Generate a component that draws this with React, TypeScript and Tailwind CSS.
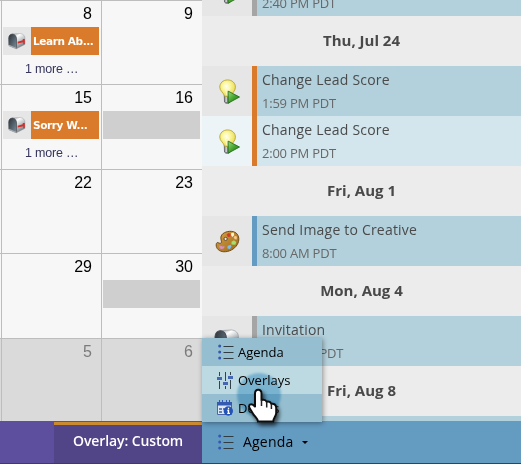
import React from "react";

function Mailbox({ className = "" }: { className?: string }) {
  return (
    <svg viewBox="0 0 18 17" className={className}>
      <defs>
        <linearGradient id="mbTop" x1="0" y1="0" x2=".6" y2="1">
          <stop offset="0" stopColor="#8d9196" />
          <stop offset=".3" stopColor="#ffffff" />
          <stop offset=".6" stopColor="#c3c7ca" />
          <stop offset="1" stopColor="#74787d" />
        </linearGradient>
        <linearGradient id="mbMouth" x1="0" y1="0" x2="1" y2="1">
          <stop offset="0" stopColor="#2c3238" />
          <stop offset="1" stopColor="#7a8f9e" />
        </linearGradient>
      </defs>
      <path d="M4.500 1 12 .5c3 .2 4.900 2 4.900 4.600v6.300L8.500 15.700V6C8.300 3 7 1.500 4.500 1Z" fill="url(#mbTop)" stroke="#8b8f94" strokeWidth=".4" />
      <path d="M.7 5.200C.8 2.500 2.300 1 4.500 1.100 7 1.400 8.400 3.400 8.500 6v9.500L.9 12.300Z" fill="url(#mbMouth)" stroke="#4a4f54" strokeWidth=".7" />
      <path d="M1 11.800 8.500 14.700v1.600L1 13.300Z" fill="#a5a9ad" />
      <path d="M9.700 8.800 14.800 7.300V6h2v4.700l-1.500.5V9.300L9.700 10.500Z" fill="#d52d28" />
    </svg>
  );
}

function Bulb() {
  return (
    <svg viewBox="0 0 22 26" className="h-[25px] w-[21px] translate-x-[2px]">
      <defs>
        <radialGradient id="glow" cx=".42" cy=".38" r=".62">
          <stop offset="0" stopColor="#fffff0" />
          <stop offset=".4" stopColor="#fbf7a0" />
          <stop offset="1" stopColor="#ead94a" />
        </radialGradient>
        <linearGradient id="go" x1="0" y1="0" x2="1" y2="1">
          <stop offset="0" stopColor="#9bdc7a" />
          <stop offset=".5" stopColor="#45a52e" />
          <stop offset="1" stopColor="#1e7414" />
        </linearGradient>
      </defs>
      <path d="M5.500 17h6v7.300c-.8 1.500-5 1.500-5.700-.2Z" fill="#8a8c8f" stroke="#55575a" strokeWidth=".8" />
      <path d="M7.500 18v6" stroke="#e2e4e6" strokeWidth="1.200" />
      <path d="M9 .9c4.900 0 8.200 3.300 8.200 7.600 0 3.900-3.300 5.500-4.500 9.200-1 .8-6 .8-7 0C4.800 14 .8 12.400.8 8.500.8 4.200 4.100.9 9 .9Z" fill="url(#glow)" stroke="#b3a12f" strokeWidth=".9" />
      <path d="M7 10 8 16.500M10.500 10 9.500 16.500M6.500 9.500h4.500" fill="none" stroke="#fffde0" strokeWidth=".8" />
      <path d="M9.600 12.600 21.500 18.800 9.600 25.200Z" fill="url(#go)" stroke="#226a1b" strokeWidth=".9" strokeLinejoin="round" />
    </svg>
  );
}

function Palette() {
  return (
    <svg viewBox="0 0 26 24" className="h-[23px] w-[25px]">
      <defs>
        <linearGradient id="wood" x1="0" y1="0" x2="1" y2="1">
          <stop offset="0" stopColor="#d8a348" />
          <stop offset="1" stopColor="#9c6618" />
        </linearGradient>
      </defs>
      <path d="M8 4C12 .8 18.500.5 22 3.200c3.500 2.800 3.500 8.200 1.200 12-3 5-8.700 7.700-14 7.500C4.500 22.500 1 19.500 1.200 15.500c.1-2.400 1.200-2.800 2.700-2 1.600.9 3 .2 2.800-1.300C6.300 9.700 5 7 8 4Z" fill="url(#wood)" stroke="#6c4712" />
      <circle cx="11" cy="9.300" r="1.700" fill="#e9e9e5" stroke="#594018" strokeWidth=".9" />
      <path d="m12 5 2-2 2.200 1-.2 3-2.500.3Z" fill="#cf3d2a" />
      <path d="m17 3.200 2.500-.5.500 2.800-2 1.700-1.300-2Z" fill="#fff4d0" />
      <path d="m20.500 6 2.300.8-.2 3-2.200-.2-.8-1.800Z" fill="#f6c68a" />
      <path d="m17.200 12.200 2.500-1.400 2.500 1.700-1 3-4-.3Z" fill="#9de06c" />
      <path d="m13.200 16.500 3.300-1.200.5 2-1.500 2.700-2.700-1Z" fill="#79bfef" />
      <path d="M4.300 16.200c2.300.4 3.600 1.500 5.500.5.300 2-1 3.200-3 3.200-1.600 0-2.500-1.400-2.500-3.700Z" fill="#d58fc2" />
    </svg>
  );
}

function ListIcon() {
  return (
    <svg viewBox="0 0 16 16" className="h-4 w-4">
      <path d="M5.500 2.500H15.500M5.500 8.500H15.500M5.500 14.500H15.500" stroke="#303b42" />
      <circle cx="1.700" cy="2" r="1.500" fill="#3557b5" />
      <circle cx="1.700" cy="8" r="1.500" fill="#3557b5" />
      <circle cx="1.700" cy="14" r="1.500" fill="#3557b5" />
    </svg>
  );
}

function SlidersIcon() {
  return (
    <svg viewBox="0 0 16 17" className="h-[17px] w-4">
      <path d="M2.500 0v4M2.500 9v8M8.500 0v9M8.500 14v3M13.500 0v3M13.500 8v9" stroke="#34434c" />
      <path d="M0 5h5v3H0ZM6 10h5v3H6ZM11 4h5v3h-5Z" fill="#4468b4" />
    </svg>
  );
}

function CalendarInfoIcon() {
  return (
    <svg viewBox="0 0 16 16" className="h-4 w-4">
      <path d="M.5 3.500h14v11H.5Z" fill="#dce9f4" stroke="#4967a8" />
      <path d="M0 2h15v3.500H0Z" fill="#3459b0" />
      <path d="M2.500 0v3M5.500 0v3M9.500 0v3M12.500 0v3" stroke="#3459b0" />
      <path d="M2 8h3v2H2ZM6 8h2v2H6ZM2 11h3v2H2Z" fill="#6681b8" />
      <circle cx="11.300" cy="11" r="4.700" fill="#2453b7" />
      <path d="M11.500 7.700v1.500M10.300 10.500h1.200v3M10.200 13.300h2.800" fill="none" stroke="#fff" strokeWidth="1.300" />
    </svg>
  );
}

function HandCursor() {
  return (
    <svg viewBox="0 0 44 52" className="absolute left-[42px] top-[48px] z-20 h-[52px] w-11 overflow-visible">
      <defs>
        <filter id="handShadow" x="-30%" y="-20%" width="170%" height="160%">
          <feDropShadow dx="2" dy="3" stdDeviation="2" floodColor="#000" floodOpacity=".65" />
        </filter>
      </defs>
      <path d="M11 7.500c0-2.500 1.200-3.700 3.200-3.700S17.500 5 17.500 7.500V14c2.500-.5 4.500.2 5.200 1.800 2.300-.6 4 .3 4.700 2 3-.4 4.800 1.200 4.800 4.200v5c0 3.500-2.700 4.500-3 8.500H14c-.5-3.500-3.300-4.700-5.300-8.300-1.600-3-4-5.500-3.700-7.200.3-2 3.200-2.800 6 .5Z" fill="#fff" stroke="#111" strokeWidth="2" strokeLinejoin="round" filter="url(#handShadow)" />
      <path d="M17.500 14v6M22.700 16v5.500M27.400 18v5" stroke="#222" strokeWidth="1.500" />
    </svg>
  );
}

function Day({ n, muted, last, more, event, block }: { n: number; muted?: boolean; last?: boolean; more?: boolean; event?: string; block?: boolean }) {
  return (
    <div className={`border-l border-t border-[#bdbdbd] ${last ? "w-[101px]" : "w-[100px]"} ${muted ? "bg-[#dadada] text-[#7b7b7b]" : "bg-[#f7f7f7] text-black"}`}>
      <div className="pr-[9px] pt-[3px] text-right text-base leading-5">{n}</div>
      {event && (
        <div className="ml-px mt-[3px] flex h-7 w-24">
          <div className="flex w-7 items-center justify-center bg-[#e6e6e6]"><Mailbox className="h-[17px] w-[18px]" /></div>
          <div className="w-[68px] whitespace-nowrap bg-[#d97b2a] pl-[2px] font-['DejaVu_Sans',sans-serif] text-[10.5px] font-bold leading-[29px] tracking-[-0.4px] text-white">{event}</div>
        </div>
      )}
      {more && <div className="pl-[23px] pt-[4px] text-[12.5px] leading-5 tracking-[-0.2px] text-[#35355d]">1 more …</div>}
      {block && <div className="ml-px mt-[3px] h-7 w-[97px] bg-[#cfcfcf]" />}
    </div>
  );
}

function Heading({ children }: { children: React.ReactNode }) {
  return <div className="h-[50px] shrink-0 bg-[#ececec] text-center text-[15px] font-bold leading-[49px] text-[#494949]">{children}</div>;
}

function Entry({ title, time, stripe, icon, light }: { title: string; time: string; stripe: string; icon: React.ReactNode; light?: boolean }) {
  return (
    <div className={`flex h-[50px] shrink-0 ${light ? "bg-[#d3e6ed]" : "bg-[#b3d1dc]"}`}>
      <div className={`flex w-[50px] items-center justify-center ${light ? "bg-[#ecf4f7]" : "bg-[#e6e6e6]"}`}>{icon}</div>
      <div className={`w-[5px] ${stripe}`} />
      <div className="whitespace-nowrap pl-[5px] pt-[2px]">
        <div className="text-[14px] leading-[24px] tracking-[0.2px] text-[#4a4a4a]">{title}</div>
        <div className="text-[13px] leading-[22px] tracking-[-0.22px] text-[#686868]">{time}</div>
      </div>
    </div>
  );
}

export default function App() {
  return (
    <div className="relative flex h-[464px] w-[521px] flex-col overflow-hidden bg-[#ececec] font-['Open_Sans',sans-serif]">
      <div className="flex h-[421px]">
        <div className="grid w-[202px] grid-cols-[1px_100px_101px] grid-rows-[84px_85px_84px_85px_83px] bg-[#f7f7f7] font-['Liberation_Sans',Arial,sans-serif]">
          <div className="border-t border-[#bdbdbd]" />
          <Day n={8} event="Learn Ab..." more />
          <Day n={9} last />
          <div className="border-t border-[#bdbdbd]" />
          <Day n={15} event="Sorry W..." more />
          <Day n={16} last block />
          <div className="border-t border-[#bdbdbd]" />
          <Day n={22} />
          <Day n={23} last />
          <div className="border-t border-[#bdbdbd]" />
          <Day n={29} />
          <Day n={30} last block />
          <div className="border-t border-[#bdbdbd] bg-[#dadada]" />
          <Day n={5} muted />
          <Day n={6} muted last />
        </div>
        <div className="flex w-[319px] flex-col overflow-hidden">
          <div className="flex h-4 shrink-0 flex-col justify-end overflow-hidden">
            <Entry title="Change Lead Score" time="2:40 PM PDT" stripe="bg-[#a5a5a5]" icon={<Bulb />} />
          </div>
          <Heading>Thu, Jul 24</Heading>
          <Entry title="Change Lead Score" time="1:59 PM PDT" stripe="bg-[#d97b2a]" icon={<Bulb />} />
          <Entry title="Change Lead Score" time="2:00 PM PDT" stripe="bg-[#d97b2a]" icon={<Bulb />} light />
          <Heading>Fri, Aug 1</Heading>
          <Entry title="Send Image to Creative" time="8:00 AM PDT" stripe="bg-[#649bc3]" icon={<Palette />} />
          <Heading>Mon, Aug 4</Heading>
          <Entry title="Invitation" time="12:00 PM PDT" stripe="bg-[#a5a5a5]" icon={<Mailbox className="h-[25px] w-[26px]" />} />
          <Heading>Fri, Aug 8</Heading>
          <div className="h-[5px] bg-[#b3d1dc]" />
        </div>
      </div>

      <div className="flex h-[43px] border-b border-[#414141]">
        <div className="w-[54px] bg-[#5e4f9e]" />
        <div className="w-[148px] border-t border-[#5e4f9e] bg-[#514487]">
          <div className="h-[3px] bg-[#cc8a30]" />
          <div className="pl-[19px] text-[14px] font-semibold leading-[31px] tracking-[-0.1px] text-white">Overlay: Custom</div>
        </div>
        <div className="flex w-[319px] items-center bg-[#649bc1] pl-4">
          <ListIcon />
          <span className="pl-[9px] text-[14px] leading-5 tracking-[0.2px] text-black">Agenda</span>
          <span className="ml-[9px] border-x-[3px] border-t-[3px] border-x-transparent border-t-black" />
        </div>
      </div>

      <div className="absolute left-[202px] top-[338px] w-[120px] text-[13px] leading-7 text-black shadow-[1px_1px_5px_rgba(0,0,0,0.4)]">
        <div className="flex h-7 items-center bg-[#95bfd0] pl-4"><ListIcon /><span className="pl-1">Agenda</span></div>
        <div className="flex h-7 items-center bg-[#bdd9e2] pl-[15px]"><SlidersIcon /><span className="pl-[5px]">Overlays</span></div>
        <div className="flex h-7 items-center bg-[#95bfd0] pl-[15px]"><CalendarInfoIcon /><span className="pl-[5px]">Details</span></div>
        <div className="absolute left-[35px] top-[35px] z-10 size-11 rounded-full bg-[#a3d2ea] mix-blend-multiply blur-[1px]" />
        <HandCursor />
      </div>
    </div>
  );
}
